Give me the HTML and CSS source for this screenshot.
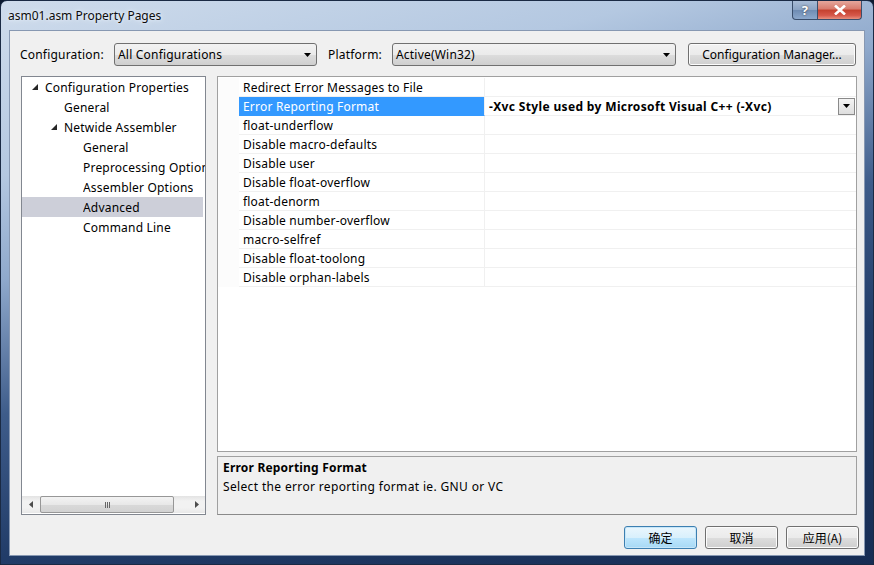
FILE: index.html
```html
<!DOCTYPE html>
<html>
<head>
<meta charset="utf-8">
<title>asm01.asm Property Pages</title>
<link rel="stylesheet" href="styles.css">
</head>
<body>
<div class="window">
  <div class="titlebar">
    <span class="title">asm01.asm Property Pages</span>
    <div class="caption-btns">
      <div class="cbtn help">?</div>
      <div class="cbtn close">
        <svg width="12" height="10" viewBox="0 0 12 10"><path d="M1 0.5 L11 9.5 M11 0.5 L1 9.5" stroke="#fff" stroke-width="2.6" fill="none"/></svg>
      </div>
    </div>
  </div>
  <div class="client">
    <div class="toolbar">
      <span class="lbl lbl-config">Configuration:</span>
      <div class="combo combo-config"><span>All Configurations</span><svg class="arrow" width="7" height="4" viewBox="0 0 7 4"><path d="M0 0 H7 L3.5 4 Z" fill="#000"/></svg></div>
      <span class="lbl lbl-platform">Platform:</span>
      <div class="combo combo-platform"><span>Active(Win32)</span><svg class="arrow" width="7" height="4" viewBox="0 0 7 4"><path d="M0 0 H7 L3.5 4 Z" fill="#000"/></svg></div>
      <div class="btn btn-mgr">Configuration Manager...</div>
    </div>
    <div class="main">
      <div class="tree">
        <div class="tree-items">
          <div class="titem lvl0"><svg class="exp" width="6" height="6" viewBox="0 0 6 6"><path d="M6 0 V6 H0 Z" fill="#262626"/></svg><span>Configuration Properties</span></div>
          <div class="titem lvl1 leaf"><span>General</span></div>
          <div class="titem lvl1"><svg class="exp" width="6" height="6" viewBox="0 0 6 6"><path d="M6 0 V6 H0 Z" fill="#262626"/></svg><span>Netwide Assembler</span></div>
          <div class="titem lvl2 leaf"><span>General</span></div>
          <div class="titem lvl2 leaf"><span>Preprocessing Options</span></div>
          <div class="titem lvl2 leaf"><span>Assembler Options</span></div>
          <div class="titem lvl2 leaf selected"><span>Advanced</span></div>
          <div class="titem lvl2 leaf"><span>Command Line</span></div>
        </div>
        <div class="hscroll">
          <div class="sarrow"><svg width="4" height="7" viewBox="0 0 4 7"><path d="M4 0 V7 L0 3.5 Z" fill="#4d4d4d"/></svg></div>
          <div class="strack">
            <div class="sthumb"><span class="grip"><i></i><i></i><i></i></span></div>
          </div>
          <div class="sarrow"><svg width="4" height="7" viewBox="0 0 4 7"><path d="M0 0 V7 L4 3.5 Z" fill="#4d4d4d"/></svg></div>
        </div>
      </div>
      <div class="right">
        <div class="grid">
          <div class="row"><div class="gut"></div><div class="name">Redirect Error Messages to File</div><div class="val"></div></div>
          <div class="row sel"><div class="gut"></div><div class="name">Error Reporting Format</div><div class="val"><span class="bold">-Xvc Style used by Microsoft Visual C++ (-Xvc)</span><div class="ddbtn"><svg width="7" height="4" viewBox="0 0 7 4"><path d="M0 0 H7 L3.5 4 Z" fill="#000"/></svg></div></div></div>
          <div class="row"><div class="gut"></div><div class="name">float-underflow</div><div class="val"></div></div>
          <div class="row"><div class="gut"></div><div class="name">Disable macro-defaults</div><div class="val"></div></div>
          <div class="row"><div class="gut"></div><div class="name">Disable user</div><div class="val"></div></div>
          <div class="row"><div class="gut"></div><div class="name">Disable float-overflow</div><div class="val"></div></div>
          <div class="row"><div class="gut"></div><div class="name">float-denorm</div><div class="val"></div></div>
          <div class="row"><div class="gut"></div><div class="name">Disable number-overflow</div><div class="val"></div></div>
          <div class="row"><div class="gut"></div><div class="name">macro-selfref</div><div class="val"></div></div>
          <div class="row"><div class="gut"></div><div class="name">Disable float-toolong</div><div class="val"></div></div>
          <div class="row"><div class="gut"></div><div class="name">Disable orphan-labels</div><div class="val"></div></div>
        </div>
        <div class="desc">
          <div class="desc-title">Error Reporting Format</div>
          <div class="desc-text">Select the error reporting format ie. GNU or VC</div>
        </div>
      </div>
    </div>
    <div class="buttons">
      <div class="btn dbtn default">确定</div>
      <div class="btn dbtn">取消</div>
      <div class="btn dbtn">应用(A)</div>
    </div>
  </div>
</div>
</body>
</html>
```
FILE: styles.css
```css
* { box-sizing: border-box; }
html, body { margin: 0; padding: 0; background: #0d1a30; }
body { font-family: "Noto Sans", "Noto Sans CJK SC", sans-serif; font-size: 12px; color: #000; letter-spacing: 0.2px; }

.window {
  width: 874px; height: 565px;
  padding: 0 8px 8px 8px;
  display: flex; flex-direction: column;
  border-radius: 7px 7px 0 0;
  overflow: hidden;
  background:
    linear-gradient(165deg, #cfdcec 0%, #b4c8e1 22%, #8fa9cc 35%, #3e5c8a 52%, #213c68 70%, #172d54 100%);
  border: 1px solid #1a2a44;
}

.titlebar {
  height: 29px; flex: none;
  display: flex; align-items: flex-start; justify-content: space-between;
}
.title {
  margin-top: 6px; margin-left: -1px;
  font-size: 12px; color: #0c0c0c; letter-spacing: 0;
  text-shadow: 0 0 6px #e8f0fa, 0 0 3px #eef4fb;
}
.caption-btns { display: flex; margin-right: 3px; }
.cbtn {
  height: 19px; display: flex; align-items: center; justify-content: center;
  border: 1px solid #3a4e6b; border-top: none;
  color: #fff; font-weight: bold; font-size: 13px;
  text-shadow: 0 0 2px #333;
}
.help {
  width: 26px; border-radius: 0 0 0 4px;
  background: linear-gradient(#a9bcd6 0%, #8aa3c4 50%, #6f8cb3 51%, #8ca8cc 100%);
}
.close {
  width: 44px; border-left: none; border-radius: 0 0 4px 0;
  background: linear-gradient(#e5a79c 0%, #d77a6c 45%, #c4402e 50%, #d6584a 80%, #e8907f 100%);
}

.client {
  flex: 1;
  background: #f0f0f0;
  border: 1px solid #8798b2;
  display: flex; flex-direction: column;
}

.toolbar {
  display: flex; align-items: center;
  height: 23px; margin-top: 12px; padding-left: 10px;
}
.lbl { flex: none; }
.lbl-config { width: 94px; }
.lbl-platform { width: 64px; margin-left: 11px; }
.combo {
  height: 23px; flex: none;
  display: flex; align-items: center; justify-content: space-between;
  padding: 0 4px 0 3px;
  border: 1px solid #707070; border-radius: 3px;
  background: linear-gradient(#f2f2f2 0%, #ebebeb 50%, #dddddd 51%, #cfcfcf 100%);
}
.combo-config { width: 203px; }
.combo-platform { width: 284px; }
.arrow { margin-right: 1px; }
.btn {
  height: 23px; flex: none;
  display: flex; align-items: center; justify-content: center;
  border: 1px solid #707070; border-radius: 3px;
  background: linear-gradient(#f2f2f2 0%, #ebebeb 50%, #dddddd 51%, #cfcfcf 100%);
  box-shadow: inset 0 0 0 1px #fcfcfc;
}
.btn-mgr { width: 168px; margin-left: 12px; letter-spacing: 0; }

.main {
  display: flex; margin-top: 10px; padding-left: 11px;
  height: 439px;
}
.tree {
  width: 185px; height: 439px;
  border: 1px solid #828790;
  background: #fff;
  display: flex; flex-direction: column;
}
.tree-items { flex: 1; overflow: hidden; }
.titem {
  height: 20px; display: flex; align-items: center;
  white-space: nowrap; padding-right: 0;
}
.titem .exp { flex: none; margin-right: 7px; }
.lvl0 { padding-left: 10px; }
.lvl1 { padding-left: 29px; }
.lvl1.leaf { padding-left: 42px; }
.lvl2.leaf { padding-left: 61px; }
.titem.selected { background: #cdcfd9; margin-right: 2px; }
.titem span { overflow: hidden; }

.hscroll {
  height: 17px; flex: none; margin-bottom: 1px;
  display: flex; align-items: stretch;
  background: linear-gradient(#e3e3e3, #f2f2f2 30%, #f2f2f2 70%, #e8e8e8);
}
.sarrow { width: 17px; display: flex; align-items: center; justify-content: center; }
.strack { flex: 1; padding: 0 11px 0 1px; display: flex; }
.sthumb {
  width: 134px; margin: 0;
  border: 1px solid #979797; border-radius: 2px;
  background: linear-gradient(#f3f3f3 0%, #e8e8e8 50%, #d9d9d9 51%, #d2d2d2 100%);
  display: flex; align-items: center; justify-content: center;
}
.grip { display: flex; gap: 1px; }
.grip i { display: block; width: 1px; height: 6px; background: #666; }

.right {
  width: 640px; margin-left: 11px;
  display: flex; flex-direction: column;
}
.grid {
  height: 376px; flex: none;
  border: 1px solid #a0a0a0;
  padding-top: 1px;
  background: #fff;
}
.row {
  display: grid; grid-template-columns: 21px 246px 1fr;
  height: 19px;
}
.gut { background: #fcfcfc; }
.name {
  padding-left: 4px; padding-top: 1px; line-height: 17px;
  border-bottom: 1px solid #f0f0f0; border-right: 1px solid #f0f0f0;
  white-space: nowrap; overflow: hidden;
}
.val {
  border-bottom: 1px solid #f0f0f0;
  display: flex; align-items: center; justify-content: space-between;
  padding-left: 4px; padding-right: 1px;
}
.row.sel .name { background: #3399ff; color: #fff; border-bottom-color: #3399ff; }
.bold { font-weight: bold; white-space: nowrap; letter-spacing: 0.35px; padding-top: 1px; }
.ddbtn {
  width: 17px; height: 17px;
  border: 1px solid #8a8a8a;
  background: linear-gradient(#f4f4f4, #dedede);
  display: flex; align-items: center; justify-content: center;
}

.desc {
  height: 59px; margin-top: 4px; flex: none;
  border: 1px solid #a0a0a0;
  border-bottom-color: #8a8a8a;
  padding: 1px 5px 0 5px;
}
.desc-title { font-weight: bold; line-height: 19px; }
.desc-text { line-height: 19px; letter-spacing: 0.35px; }

.buttons {
  display: flex; justify-content: flex-end; gap: 8px;
  margin-top: 11px; padding-right: 5px;
}
.dbtn { width: 73px; font-family: "Noto Sans CJK SC", "Noto Sans", sans-serif; letter-spacing: 0; }
.dbtn.default {
  border-color: #3c7fb1;
  background: linear-gradient(#eaf6fd 0%, #d9f0fc 50%, #bee6fd 51%, #a7d9f5 100%);
  box-shadow: inset 0 0 0 1px #c7e6f8;
}
```
